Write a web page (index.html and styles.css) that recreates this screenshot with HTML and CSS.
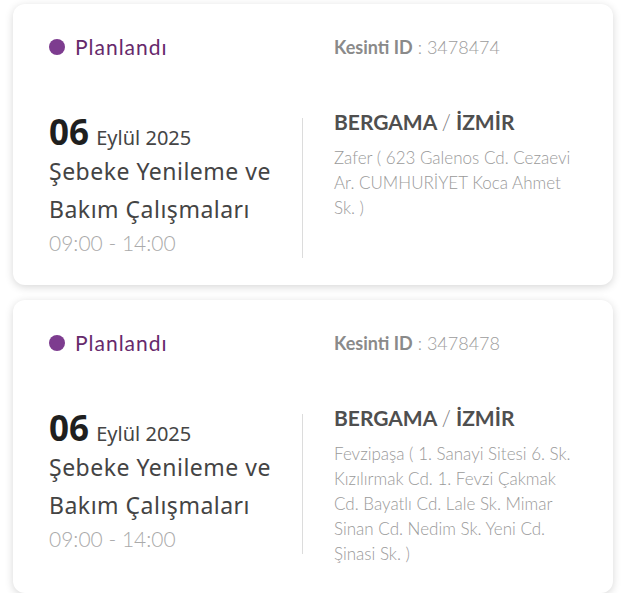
FILE: index.html
```html
<!DOCTYPE html>
<html lang="tr">
<head>
    <meta charset="UTF-8">
    <title>Planlı Kesintiler</title>
    <link rel="stylesheet" href="styles.css">
</head>
<body>

<div class="outage-list">

    <div class="outage-card">
        <div class="outage-status"><span class="status-dot"></span>Planlandı</div>
        <div class="outage-id"><b>Kesinti ID</b> : 3478474</div>

        <div class="outage-when">
            <div class="outage-date"><span class="day">06</span> Eylül 2025</div>
            <div class="outage-title">Şebeke Yenileme ve Bakım Çalışmaları</div>
            <div class="outage-time">09:00 - 14:00</div>
        </div>
        <div class="outage-where">
            <div class="outage-city">BERGAMA <span class="slash">/</span> İZMİR</div>
            <div class="outage-address">Zafer ( 623 Galenos Cd. Cezaevi Ar. CUMHURİYET Koca Ahmet Sk. )</div>
        </div>
    </div>

    <div class="outage-card">
        <div class="outage-status"><span class="status-dot"></span>Planlandı</div>
        <div class="outage-id"><b>Kesinti ID</b> : 3478478</div>

        <div class="outage-when">
            <div class="outage-date"><span class="day">06</span> Eylül 2025</div>
            <div class="outage-title">Şebeke Yenileme ve Bakım Çalışmaları</div>
            <div class="outage-time">09:00 - 14:00</div>
        </div>
        <div class="outage-where">
            <div class="outage-city">BERGAMA <span class="slash">/</span> İZMİR</div>
            <div class="outage-address">Fevzipaşa ( 1. Sanayi Sitesi 6. Sk. Kızılırmak Cd. 1. Fevzi Çakmak Cd. Bayatlı Cd. Lale Sk. Mimar Sinan Cd. Nedim Sk. Yeni Cd. Şinasi Sk. )</div>
        </div>
    </div>

</div>

</body>
</html>
```

FILE: styles.css
```css
html, body, div, span, b {
    margin: 0px;
    padding: 0px;
}

body {
    background: #ffffff;
    font-family: "Lato", "Liberation Sans", sans-serif;
}

.outage-list {
    display: flex;
    flex-direction: column;
    gap: 15px;
    padding: 4px 8px 0px 13px;
}

.outage-card {
    display: grid;
    grid-template-columns: 254px 1fr;
    align-items: start;
    background: #ffffff;
    border-radius: 12px;
    box-shadow: 0px 2px 9px rgba(0, 0, 0, 0.16);
    padding: 30px 36px 27px 36px;
}

.outage-status {
    display: flex;
    align-items: center;
    gap: 10px;
    font-size: 21px;
    letter-spacing: 1px;
    line-height: 26px;
    color: #66296b;
}

.status-dot {
    width: 16px;
    height: 16px;
    border-radius: 50%;
    background: #7d3c8f;
}

.outage-id {
    padding-left: 31px;
    font-size: 18px;
    line-height: 26px;
    color: #9c9c9c;
    font-weight: 300;
}

.outage-id b {
    color: #8a8a8a;
    font-weight: 700;
}

.outage-when {
    margin-top: 58px;
    border-right: 1px solid #dcdcdc;
    font-family: "Noto Sans", "Open Sans", sans-serif;
}

.outage-date {
    font-size: 20px;
    line-height: 28px;
    color: #454545;
}

.outage-date .day {
    font-size: 35px;
    font-weight: 700;
    color: #1f1f1f;
    margin-right: 2px;
}

.outage-title {
    font-size: 23px;
    letter-spacing: 0.5px;
    line-height: 38px;
    color: #444444;
    padding-right: 12px;
}

.outage-time {
    font-family: "Lato", sans-serif;
    font-size: 21px;
    font-weight: 300;
    line-height: 30px;
    color: #aaaaaa;
}

.outage-where {
    margin-top: 47px;
    padding-left: 31px;
}

.outage-city {
    font-size: 21px;
    font-weight: 700;
    line-height: 30px;
    color: #4f4f4f;
}

.outage-city .slash {
    font-weight: 300;
    color: #777777;
}

.outage-address {
    margin-top: 8px;
    font-size: 17px;
    line-height: 25px;
    color: #9a9a9a;
    font-weight: 300;
}
```
